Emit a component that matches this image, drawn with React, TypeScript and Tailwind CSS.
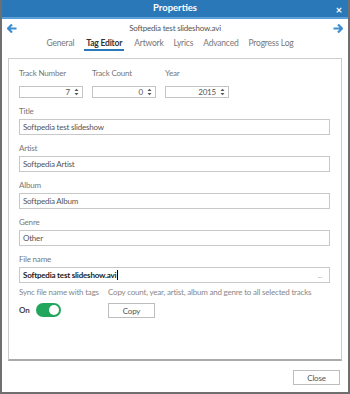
import React from 'react'

const font = { fontFamily: 'Lato, "Open Sans", sans-serif' }

const Spin: React.FC<{ value: string }> = ({ value }) => (
  <div className="flex h-[12px] w-[64px] items-center justify-end border border-[#c4c4c4] pr-[3px] text-[8px] text-[#555]">
    <span className="mr-[4px]">{value}</span>
    <svg width="5" height="8" viewBox="0 0 5 8">
      <path d="M0.5 3 L2.5 0.8 L4.5 3 Z" fill="#555" />
      <path d="M0.5 5 L2.5 7.2 L4.5 5 Z" fill="#555" />
    </svg>
  </div>
)

const Field: React.FC<{ label: string; value: string; bold?: boolean; dots?: boolean }> = ({
  label,
  value,
  bold,
  dots,
}) => (
  <div className="flex flex-col">
    <div className="h-[12px] text-[8px] leading-[12px] text-[#777]">{label}</div>
    <div className="mt-[2px] flex h-[16px] w-[311px] items-center border border-[#c8c8c8] px-[3px] text-[8px] text-[#555]">
      <span className={bold ? 'font-bold text-[#222]' : ''}>{value}</span>
      {bold && <span className="ml-[1px] h-[10px] w-px bg-black" />}
      {dots && <span className="ml-auto mr-[4px] text-[7px] text-[#aaa]">...</span>}
    </div>
  </div>
)

const tabs = ['General', 'Tag Editor', 'Artwork', 'Lyrics', 'Advanced', 'Progress Log']

export default function App() {
  return (
    <div
      className="flex h-[394px] w-[350px] flex-col border-x-2 border-b-2 border-[#6f6f6f] bg-white tracking-[-0.2px]"
      style={font}
    >
      <div className="relative flex h-[19px] shrink-0 items-center justify-center border-b-2 border-[#5b9fd6] bg-[#2b78b9]">
        <span className="text-[9.5px] font-bold tracking-normal text-white">Properties</span>
        <span className="absolute right-[6px] top-[2px] text-[11px] font-bold text-white">×</span>
      </div>

      <div className="flex h-[18px] items-center justify-between px-[5px]">
        <svg width="10" height="9" viewBox="0 0 10 9">
          <path d="M5 0.5 L1 4.5 L5 8.5 M1.5 4.5 H9.5" stroke="#3d8dd2" strokeWidth="2.2" fill="none" />
        </svg>
        <span className="text-[8px] text-[#555]">Softpedia test slideshow.avi</span>
        <svg width="10" height="9" viewBox="0 0 10 9">
          <path d="M5 0.5 L9 4.5 L5 8.5 M8.5 4.5 H0.5" stroke="#3d8dd2" strokeWidth="2.2" fill="none" />
        </svg>
      </div>

      <div className="flex h-[16px] items-start justify-center gap-[10px] pr-[10px] text-[8.5px]">
        {tabs.map(t =>
          t === 'Tag Editor' ? (
            <span
              key={t}
              className="border-b-2 border-[#2b78b9] px-[2px] font-bold leading-[12px] text-[#333]"
            >
              {t}
            </span>
          ) : (
            <span key={t} className="leading-[12px] text-[#777]">
              {t}
            </span>
          ),
        )}
      </div>

      <div className="mx-[6px] mt-[5px] flex h-[303px] flex-col border border-b-2 border-[#cdcdcd] border-b-[#aaa] px-[10px] pt-[8px]">
        <div className="flex gap-[9px]">
          {[
            ['Track Number', '7'],
            ['Track Count', '0'],
            ['Year', '2015'],
          ].map(([l, v]) => (
            <div key={l} className="flex flex-col">
              <div className="h-[12px] text-[8px] leading-[12px] text-[#777]">{l}</div>
              <div className="mt-[7px]">
                <Spin value={v} />
              </div>
            </div>
          ))}
        </div>

        <div className="mt-[7px] flex flex-col gap-[7px]">
          <Field label="Title" value="Softpedia test slideshow" />
          <Field label="Artist" value="Softpedia Artist" />
          <Field label="Album" value="Softpedia Album" />
          <Field label="Genre" value="Other" />
          <Field label="File name" value="Softpedia test slideshow.avi" bold dots />
        </div>

        <div className="mt-[3px] flex gap-[10px] text-[8px] leading-[12px] text-[#888]">
          <div className="flex w-[79px] flex-col">
            <span className="whitespace-nowrap">Sync file name with tags</span>
            <div className="mt-[5px] flex items-center gap-[6px]">
              <span className="font-bold text-[#444]">On</span>
              <div className="flex h-[14px] w-[25px] items-center justify-end rounded-full bg-[#22a55c] pr-[2px]">
                <div className="h-[10px] w-[10px] rounded-full bg-white" />
              </div>
            </div>
          </div>
          <div className="flex flex-col">
            <span className="whitespace-nowrap">
              Copy count, year, artist, album and genre to all selected tracks
            </span>
            <div className="mt-[5px] flex h-[15px] w-[47px] items-center justify-center border border-[#bdbdbd] text-[#555]">
              Copy
            </div>
          </div>
        </div>
      </div>

      <div className="mt-[9px] flex justify-end pr-[8px]">
        <div className="flex h-[15px] w-[47px] items-center justify-center border border-[#bdbdbd] text-[8px] text-[#555]">
          Close
        </div>
      </div>
    </div>
  )
}
